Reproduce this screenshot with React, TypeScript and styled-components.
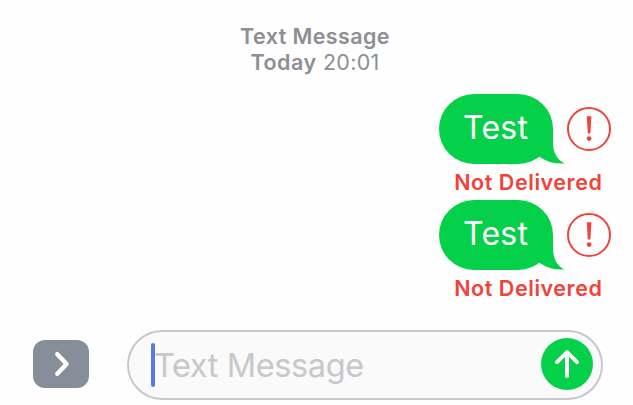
import React from "react";
import styled, { createGlobalStyle } from "styled-components";

const GlobalStyle = createGlobalStyle`
  * { box-sizing: border-box; }
  body {
    margin: 0;
    background: #fefefe;
    font-family: Inter, "Liberation Sans", sans-serif;
    overflow: hidden;
  }
`;

const Screen = styled.main`
  display: flex;
  flex-direction: column;
  width: 633px;
  height: 405px;
`;

const Header = styled.header`
  width: 630px;
  height: 94px;
  padding-top: 23px;
  text-align: center;
  font-size: 21.5px;
  line-height: 26px;
  color: #8e8e93;
`;

const HeaderTitle = styled.div`
  font-weight: 600;
  letter-spacing: 0.4px;
`;

const HeaderDate = styled.div`
  font-weight: 380;
  letter-spacing: 0.3px;

  strong {
    font-weight: 600;
    letter-spacing: 0.5px;
  }
`;

const MessageList = styled.section`
  height: 236px;
`;

const Message = styled.article`
  display: flex;
  flex-direction: column;
  align-items: flex-end;
  height: 106px;
  padding-right: 22px;
`;

const MessageRow = styled.div`
  display: flex;
  align-items: center;
  gap: 14px;
`;

const Bubble = styled.div`
  position: relative;
  width: 114px;
  height: 70px;
  padding-left: 24px;
  border-radius: 35px;
  background: #04d04a;
  color: #fff;
  font-size: 32px;
  font-weight: 370;
  line-height: 68px;
  letter-spacing: 0.25px;
`;

const Tail = styled.svg`
  position: absolute;
  left: 84px;
  top: 35px;
`;

const Status = styled.div`
  padding-right: 8.5px;
  color: #f0433a;
  font-size: 21.5px;
  font-weight: 600;
  line-height: 36px;
  letter-spacing: 0.56px;
`;

const ComposeBar = styled.footer`
  display: flex;
  align-items: center;
  padding-left: 33px;
`;

const ExpandButton = styled.button`
  display: flex;
  width: 56px;
  height: 48px;
  margin: 0 38px 2px 0;
  padding: 0;
  border: 0;
  border-radius: 12px;
  background: #868e99;
`;

const Field = styled.div`
  display: flex;
  align-items: center;
  width: 476px;
  height: 70px;
  padding: 0 8px 0 22px;
  border: 2px solid #c8c8cc;
  border-radius: 35px;
  background: #fafafa;
`;

const Caret = styled.span`
  width: 4px;
  height: 44px;
  border-radius: 2px;
  background: #557af0;
`;

const Placeholder = styled.span`
  flex: 1;
  margin-left: -1px;
  padding-top: 2px;
  color: #c7c7cc;
  font-size: 32.5px;
  font-weight: 380;
  line-height: 40px;
  letter-spacing: -0.4px;
  white-space: nowrap;
`;

const SendButton = styled.button`
  display: flex;
  width: 52px;
  height: 52px;
  margin: 0 0 2px;
  padding: 0;
  border: 0;
  border-radius: 50%;
  background: #04d04a;
`;

const AlertIcon = () => (
  <svg width="44" height="44" viewBox="0 0 44 44" fill="none">
    <circle cx="22" cy="22" r="21" stroke="#f0433a" strokeWidth="2" />
    <path d="M19.8 9.2h4.6l-1 17.4h-2.6z" fill="#f0433a" />
    <circle cx="22.1" cy="31.6" r="2.4" fill="#f0433a" />
  </svg>
);

const BubbleTail = () => (
  <Tail width="42" height="35" viewBox="0 0 42 35">
    <path d="M30 0V13C30 23 33.5 30.5 41.5 34.4C32 35 24 33 17.5 28.5L10 24Z" fill="#04d04a" />
  </Tail>
);

const messages = [
  { id: 1, text: "Test", status: "Not Delivered" },
  { id: 2, text: "Test", status: "Not Delivered" },
];

export default function App() {
  return (
    <>
      <GlobalStyle />
      <Screen>
        <Header>
          <HeaderTitle>Text Message</HeaderTitle>
          <HeaderDate>
            <strong>Today</strong> 20:01
          </HeaderDate>
        </Header>
        <MessageList>
          {messages.map((message) => (
            <Message key={message.id}>
              <MessageRow>
                <Bubble>
                  {message.text}
                  <BubbleTail />
                </Bubble>
                <AlertIcon />
              </MessageRow>
              <Status>{message.status}</Status>
            </Message>
          ))}
        </MessageList>
        <ComposeBar>
          <ExpandButton aria-label="Show apps">
            <svg width="56" height="48" viewBox="0 0 56 48" fill="none">
              <path
                d="M24.3 14.2 33.6 24 24.3 33.8"
                stroke="#fff"
                strokeWidth="4.4"
                strokeLinecap="round"
                strokeLinejoin="round"
              />
            </svg>
          </ExpandButton>
          <Field>
            <Caret />
            <Placeholder>Text Message</Placeholder>
            <SendButton aria-label="Send">
              <svg width="52" height="52" viewBox="0 0 52 52" fill="none">
                <path
                  d="M26 38V14.5M16 24.2l10-10 10 10"
                  stroke="#fff"
                  strokeWidth="4"
                  strokeLinecap="round"
                  strokeLinejoin="round"
                />
              </svg>
            </SendButton>
          </Field>
        </ComposeBar>
      </Screen>
    </>
  );
}
